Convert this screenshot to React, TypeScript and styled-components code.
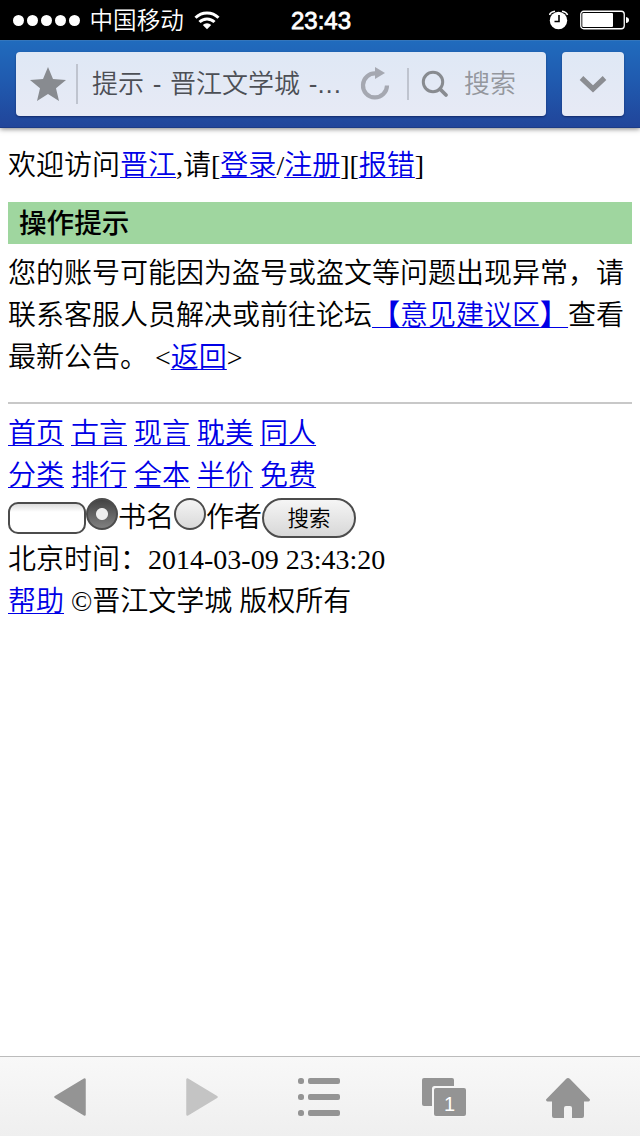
import React from 'react';
import styled, { createGlobalStyle } from 'styled-components';

const GlobalStyle = createGlobalStyle`
  * { box-sizing: border-box; }
  body { margin: 0; background: #fff; }
`;

const Screen = styled.div`
  display: flex;
  flex-direction: column;
  width: 640px;
  height: 1136px;
  overflow: hidden;
  background: #fff;
  text-spacing-trim: space-all;
`;

const StatusBar = styled.div`
  display: grid;
  grid-template-columns: 1fr auto 1fr;
  align-items: center;
  height: 40px;
  padding: 0 11px 0 13px;
  background: #000;
  color: #fff;
  font: 350 23.6px/40px 'Liberation Sans', 'Noto Sans CJK SC', sans-serif;
`;

const Signal = styled.div`
  display: flex;
  align-items: center;
  gap: 3px;
`;

const Dot = styled.i`
  width: 11px;
  height: 11px;
  border-radius: 50%;
  background: #fff;
`;

const Carrier = styled.span`
  height: 40px;
  margin: 0 7px 0 6.5px;
  line-height: 42px;
`;

const Clock = styled.span`
  height: 40px;
  font-size: 24px;
  font-weight: 400;
  line-height: 42px;
  -webkit-text-stroke: 0.8px #fff;
`;

const StatusIcons = styled.div`
  display: flex;
  justify-content: flex-end;
  align-items: center;
  gap: 11px;
`;

const Header = styled.header`
  display: flex;
  gap: 16px;
  height: 88px;
  padding: 11px 16px 12px;
  background: linear-gradient(#206bbd 0%, #2059ae 50%, #21459a 100%);
  border-top: 1px solid #3476bc;
  border-bottom: 1px solid #1c3b86;
  box-shadow: 0 1px 5px rgba(0, 0, 0, 0.5);
`;

const Panel = styled.div<{ $width: number }>`
  display: flex;
  align-items: center;
  justify-content: ${(p) => (p.$width < 100 ? 'center' : 'flex-start')};
  width: ${(p) => p.$width}px;
  height: 64px;
  border-radius: 4px;
  background: linear-gradient(#dfe8f5, #e7eaf5);
  box-shadow: 0 1px 2px rgba(0, 0, 40, 0.45);
  font: 350 26px/64px 'Liberation Sans', 'Noto Sans CJK SC', sans-serif;
  white-space: nowrap;
`;

const Divider = styled.i<{ $height: number }>`
  width: 2px;
  height: ${(p) => p.$height}px;
  background: #bfc4cf;
`;

const StarIcon = styled.svg`
  margin: 0 10px 0 14px;
`;

const PageTitle = styled.span`
  width: 268px;
  margin-left: 14px;
  color: #4c4f55;
  word-spacing: 1.5px;
`;

const Dots = styled.span`
  letter-spacing: 0.9px;
`;

const ReloadIcon = styled.svg`
  margin: 0 17px 2px 0;
`;

const SearchIcon = styled.svg`
  margin: 0 15px 0 12px;
`;

const SearchHint = styled.span`
  color: #94979d;
`;

const Page = styled.main`
  flex: 1;
  padding: 17px 8px 0;
  color: #000;
  font: 350 28px/42px 'Liberation Serif', 'Noto Sans CJK SC', serif;
`;

const Line = styled.div`
  height: 42px;
  white-space: nowrap;
`;

const Link = styled.a`
  color: #0000e6;
  text-decoration: underline;
  text-decoration-thickness: 1px;
  text-underline-offset: 2px;
`;

const Bracket = styled.span`
  font-weight: 700;
`;

const Heading = styled.h1`
  height: 42px;
  margin: 15px 0 9px;
  padding-left: 11px;
  background: #9fd69f;
  font: 500 27.6px/38px 'Noto Sans CJK SC', sans-serif;
`;

const Message = styled.p`
  margin: 0;
`;

const Rule = styled.hr`
  height: 2px;
  margin: 23px 0 9px;
  border: 0;
  background: #c8c8c8;
`;

const SearchForm = styled.form`
  display: flex;
  align-items: flex-start;
  height: 42px;
  padding-top: 1px;
  line-height: 40px;
`;

const TextField = styled.input`
  width: 78px;
  height: 32px;
  margin: 4px 0 0;
  padding: 0 6px;
  border: 2px solid #4c4c4c;
  border-radius: 10px;
  background: linear-gradient(#dcdcdc, #fff 8px);
`;

const Radio = styled.input`
  flex: none;
  appearance: none;
  width: 32px;
  height: 32px;
  margin: 0;
  border: 2px solid #4c4c4c;
  border-radius: 50%;
  background: linear-gradient(#f4f4f4, #dadada);
  &:checked {
    background: radial-gradient(circle, #eee 0 5.5px, transparent 6.5px), linear-gradient(#444, #808080);
  }
`;

const RadioLabel = styled.label`
  width: 56px;
`;

const SubmitButton = styled.button`
  width: 94px;
  height: 40px;
  padding: 0 0 3px;
  border: 2px solid #4c4c4c;
  border-radius: 20px;
  background: linear-gradient(#f7f7f7, #d6d6d6) border-box;
  color: #000;
  font: 350 21.5px/33px 'Noto Sans CJK SC', sans-serif;
`;

const Toolbar = styled.nav`
  display: grid;
  grid-template-columns: 132px 112px 124px 124px 44px;
  height: 80px;
  padding: 20px 0 0 54px;
  border-top: 1px solid #bcbcbc;
  background: linear-gradient(#f8f8f8, #efefef);
`;

const TabNumber = styled.text`
  font: 20px 'Liberation Sans', sans-serif;
  fill: #fff;
`;

const links = [
  ['首页', '古言', '现言', '耽美', '同人'],
  ['分类', '排行', '全本', '半价', '免费'],
];

export default function App() {
  return (
    <Screen>
      <GlobalStyle />
      <StatusBar>
        <Signal>
          {[0, 1, 2, 3, 4].map((i) => <Dot key={i} />)}
          <Carrier>中国移动</Carrier>
          <svg width="26" height="20" viewBox="0 0 26 20" fill="none" stroke="#fff" strokeWidth="3">
            <path d="M1.500 7.700a16.200 16.200 0 0 1 23 0M5.500 12a10.600 10.600 0 0 1 15 0" />
            <path d="M13 19.200l-4.200-4.300a6 6 0 0 1 8.400 0z" fill="#fff" stroke="none" />
          </svg>
        </Signal>
        <Clock>23:43</Clock>
        <StatusIcons>
          <svg width="20" height="20" viewBox="0 0 20 20">
            <circle cx="9.500" cy="10.500" r="8.700" fill="#fff" />
            <path d="M.5 5Q1.500 1.800 6 1.200M18.500 5Q17.500 1.800 13 1.200" fill="none" stroke="#fff" strokeWidth="1.600" />
            <path d="M10 5v6.500H5.500" fill="none" stroke="#000" strokeWidth="1.600" />
          </svg>
          <svg width="49" height="20" viewBox="0 0 49 20">
            <rect x=".75" y="1.250" width="43.500" height="17.500" rx="3" fill="none" stroke="#fff" strokeWidth="1.300" />
            <rect x="2.300" y="3" width="30.700" height="14" rx="1" fill="#fff" />
            <path d="M46 7q3 .5 3 3t-3 3z" fill="#fff" />
          </svg>
        </StatusIcons>
      </StatusBar>

      <Header>
        <Panel $width={530}>
          <StarIcon width="36" height="34" viewBox="0 0 36 34">
            <path d="M18 0l5 12 13 1-10 8.300 3 12.700-11-7-11 7 3-12.700L0 13l13-1z" fill="#888b90" />
          </StarIcon>
          <Divider $height={40} />
          <PageTitle>提示 - 晋江文学城 -<Dots>...</Dots></PageTitle>
          <ReloadIcon width="30" height="34" viewBox="0 0 30 34">
            <path d="M16 7.500A12 12 0 1 0 27 19.500" fill="none" stroke="#a5a8b1" strokeWidth="4.200" />
            <path d="M15 1l10 6-10 6z" fill="#a5a8b1" />
          </ReloadIcon>
          <Divider $height={32} />
          <SearchIcon width="28" height="28" viewBox="0 0 28 28" fill="none" stroke="#888b90">
            <circle cx="12" cy="12" r="9.700" strokeWidth="3" />
            <path d="M19 19l6 6" strokeWidth="3.800" strokeLinecap="round" />
          </SearchIcon>
          <SearchHint>搜索</SearchHint>
        </Panel>
        <Panel $width={62}>
          <svg width="28" height="18" viewBox="0 0 28 18">
            <path d="M2.500 3L14 14 25.500 3" fill="none" stroke="#8b8d92" strokeWidth="5.200" />
          </svg>
        </Panel>
      </Header>

      <Page>
        <Line>
          欢迎访问<Link>晋江</Link>,请[<Link>登录</Link>/<Link>注册</Link>][<Link>报错</Link>]
        </Line>
        <Heading>操作提示</Heading>
        <Message>
          您的账号可能因为盗号或盗文等问题出现异常{'\uff0c'}请联系客服人员解决或前往论坛<Link><Bracket>【</Bracket>意见建议区<Bracket>】</Bracket></Link>查看最新公告。 &lt;<Link>返回</Link>&gt;
        </Message>
        <Rule />
        {links.map((row) => (
          <Line key={row[0]}>
            {row.map((name) => <React.Fragment key={name}><Link>{name}</Link>{' '}</React.Fragment>)}
          </Line>
        ))}
        <SearchForm>
          <TextField />
          <Radio type="radio" name="kind" defaultChecked />
          <RadioLabel>书名</RadioLabel>
          <Radio type="radio" name="kind" />
          <RadioLabel>作者</RadioLabel>
          <SubmitButton type="button">搜索</SubmitButton>
        </SearchForm>
        <Line>北京时间{'\uff1a'}2014-03-09 23:43:20</Line>
        <Line><Link>帮助</Link> ©晋江文学城 版权所有</Line>
      </Page>

      <Toolbar>
        <svg width="34" height="40" viewBox="0 0 34 40">
          <path d="M1.500 20L30.500 2.500v35z" fill="#949494" stroke="#949494" strokeWidth="2.500" strokeLinejoin="round" />
        </svg>
        <svg width="34" height="40" viewBox="0 0 34 40">
          <path d="M30.500 20L1.500 2.500v35z" fill="#c4c4c4" stroke="#c4c4c4" strokeWidth="2.500" strokeLinejoin="round" />
        </svg>
        <svg width="42" height="40" viewBox="0 0 42 40" fill="#949494">
          {[1, 17, 33].map((y) => (
            <React.Fragment key={y}>
              <rect y={y} width="6" height="6" rx="2.500" />
              <rect x="10" y={y} width="32" height="6" rx="2" />
            </React.Fragment>
          ))}
        </svg>
        <svg width="44" height="40" viewBox="0 0 44 40">
          <rect y="1" width="32" height="28" rx="2" fill="#949494" />
          <rect x="10" y="9" width="36" height="32" rx="2.500" fill="#f5f5f5" />
          <rect x="12" y="11" width="32" height="28" rx="2" fill="#949494" />
          <TabNumber x="22" y="34">1</TabNumber>
        </svg>
        <svg width="44" height="42" viewBox="0 0 44 42">
          <path d="M22 1q1 0 2 1l20 20.500q0 2-1.500 2H38V39q0 2-2 2H26V31q0-2-2-2h-4q-2 0-2 2v10H8q-2 0-2-2V24.500H1.500q-1.500 0-1.500-2L20 2q1-1 2-1z" fill="#949494" />
        </svg>
      </Toolbar>
    </Screen>
  );
}
